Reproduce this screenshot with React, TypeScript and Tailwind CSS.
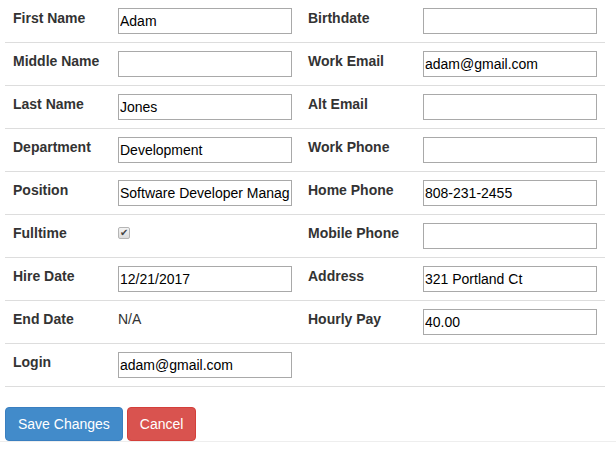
import type { ReactNode } from "react";

type Field = { label: string; value?: string; kind?: "input" | "text" | "check" | "none" };

const left: Field[] = [
  { label: "First Name", value: "Adam" },
  { label: "Middle Name", value: "" },
  { label: "Last Name", value: "Jones" },
  { label: "Department", value: "Development" },
  { label: "Position", value: "Software Developer Manager" },
  { label: "Fulltime", kind: "check" },
  { label: "Hire Date", value: "12/21/2017" },
  { label: "End Date", value: "N/A", kind: "text" },
  { label: "Login", value: "adam@gmail.com" },
];

const right: Field[] = [
  { label: "Birthdate", value: "" },
  { label: "Work Email", value: "adam@gmail.com" },
  { label: "Alt Email", value: "" },
  { label: "Work Phone", value: "" },
  { label: "Home Phone", value: "808-231-2455" },
  { label: "Mobile Phone", value: "" },
  { label: "Address", value: "321 Portland Ct" },
  { label: "Hourly Pay", value: "40.00" },
  { label: "", kind: "none" },
];

function Value({ field }: { field: Field }) {
  if (field.kind === "none") return null;
  if (field.kind === "text") return <span className="leading-[20px]">{field.value}</span>;
  if (field.kind === "check")
    return (
      <span className="mt-[4px] flex h-[12px] w-[12px] items-center justify-center rounded-[2px] border border-[#b5b5b5] bg-gradient-to-b from-[#f4f4f4] to-[#dcdcdc] text-[10px] leading-none text-[#444]">
        ✔
      </span>
    );
  return (
    <input
      defaultValue={field.value}
      className="block h-[26px] w-[174px] border border-[#a9a9a9] bg-white px-[1px] text-[14px] text-black outline-none"
    />
  );
}

function Column({ fields, labelWidth }: { fields: Field[]; labelWidth: string }) {
  return (
    <div className="flex flex-col">
      {fields.map((f, i) => (
        <div key={i} className="flex h-[43px] border-b border-[#ddd]">
          <div className={`${labelWidth} shrink-0 p-[8px] font-bold leading-[20px]`}>{f.label}</div>
          <div className="py-[8px] pr-[8px]">
            <Value field={f} />
          </div>
        </div>
      ))}
    </div>
  );
}

function Btn({ children, className }: { children: ReactNode; className: string }) {
  return (
    <button
      className={`rounded-[4px] border px-[12px] py-[6px] text-[14px] leading-[20px] text-white ${className}`}
    >
      {children}
    </button>
  );
}

export default function App() {
  return (
    <div className="min-h-[450px] bg-white font-['Liberation_Sans',Arial,sans-serif] text-[14px] text-[#333]">
      <div className="border-b border-[#eee]">
        <div className="grid grid-cols-[295px_305px] px-[5px]">
          <Column fields={left} labelWidth="w-[113px]" />
          <Column fields={right} labelWidth="w-[123px]" />
        </div>
        <div className="mt-[20px] flex gap-[4px] px-[5px]">
          <Btn className="border-[#3a7fc0] bg-[#428bca]">Save Changes</Btn>
          <Btn className="border-[#d43f3a] bg-[#d9534f]">Cancel</Btn>
        </div>
      </div>
    </div>
  );
}
